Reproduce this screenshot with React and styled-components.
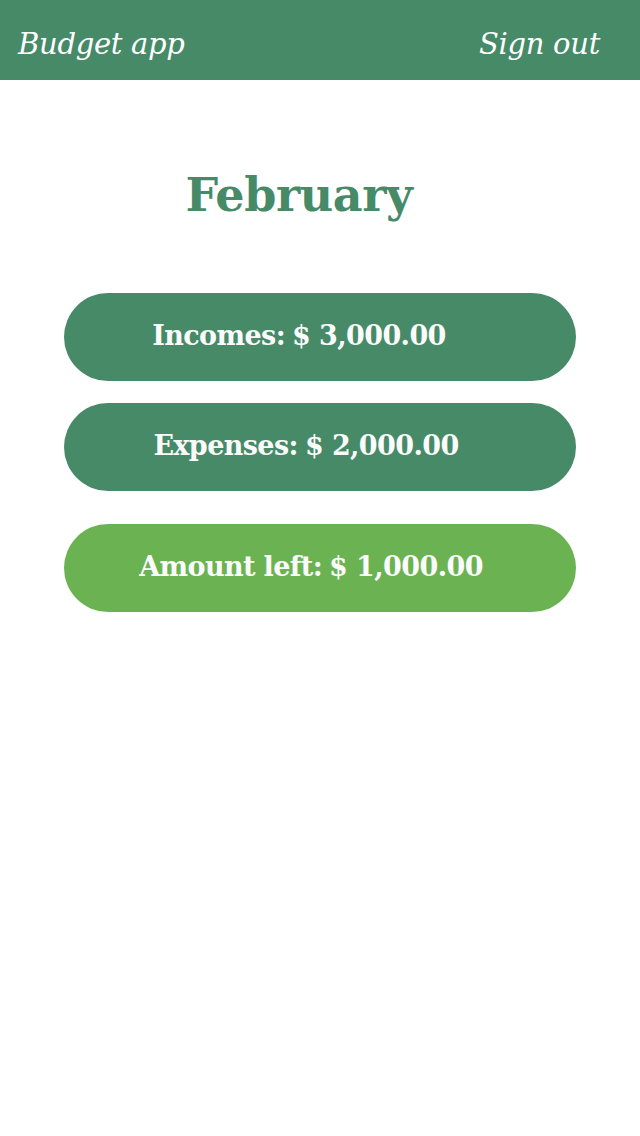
import React from "react";
import styled, { createGlobalStyle } from "styled-components";

const GlobalStyle = createGlobalStyle`
	body {
		margin: 0;
		background: #ffffff;
		font-family: "DejaVu Serif", "Liberation Serif", serif;
	}
`;

const summary = [
	{ label: "Incomes:", amount: "$ 3,000.00", color: "#468a68", shift: 42 },
	{ label: "Expenses:", amount: "$ 2,000.00", color: "#468a68", shift: 28 },
	{ label: "Amount left:", amount: "$ 1,000.00", color: "#6bb352", shift: 18, spaced: true }
];

const App = () => {
	return (
		<>
			<GlobalStyle />
			<Header>
				<Brand>Budget app</Brand>
				<SignOut>Sign out</SignOut>
			</Header>
			<Main>
				<Month>February</Month>
				<Cards>
					{summary.map((item, _) => (
						<Card key={_} color={item.color} spaced={item.spaced} shift={item.shift}>
							<Label>{item.label}</Label>
							<span>{item.amount}</span>
						</Card>
					))}
				</Cards>
			</Main>
		</>
	);
};

const Header = styled.header`
	height: 80px;
	box-sizing: border-box;
	background: #468a68;
	display: flex;
	align-items: center;
	justify-content: space-between;
	padding: 7px 40px 0 18px;
	color: #ffffff;
`;

const Brand = styled.span`
	font-style: italic;
	font-size: 29px;
	letter-spacing: -0.3px;
`;

const SignOut = styled(Brand)``;

const Main = styled.main`
	display: flex;
	flex-direction: column;
	align-items: center;
	padding-top: 92px;
`;

const Month = styled.h1`
	margin: 0 42px 0 0;
	color: #468a68;
	font-size: 46px;
	line-height: 1;
	letter-spacing: -0.4px;
	font-weight: bold;
`;

const Cards = styled.div`
	display: flex;
	flex-direction: column;
	gap: 22px;
	margin-top: 75px;
`;

const Card = styled.div`
	width: 512px;
	height: 88px;
	box-sizing: border-box;
	border-radius: 44px;
	background: ${({ color }) => color};
	color: #fbfbfb;
	display: flex;
	align-items: center;
	justify-content: center;
	gap: 7px;
	padding-right: ${({ shift }) => shift}px;
	padding-bottom: 3px;
	font-size: 27px;
	font-weight: bold;
	letter-spacing: -0.6px;
	margin-top: ${({ spaced }) => (spaced ? "11px" : "0")};
`;

const Label = styled.span``;

export default App;
